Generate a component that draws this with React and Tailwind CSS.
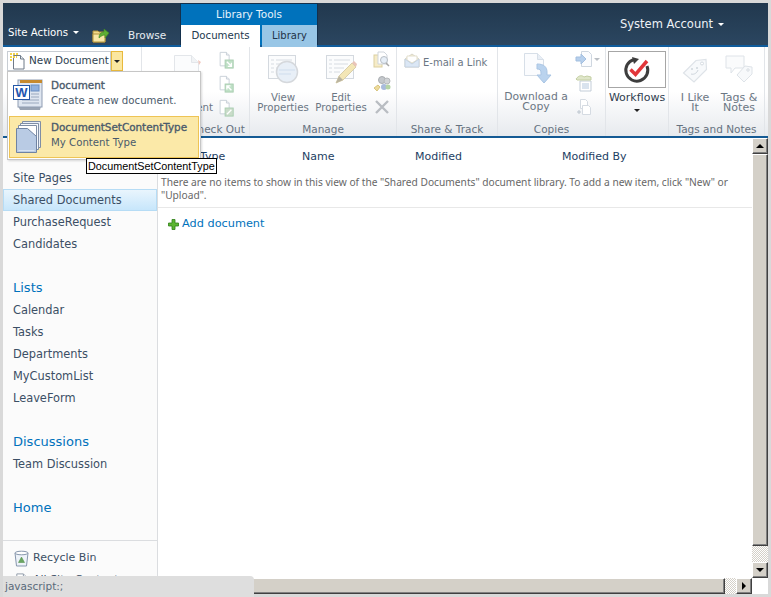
import React from "react";

function Caret({ className = "" }) {
  return <span className={`inline-block w-0 h-0 border-l-[3px] border-r-[3px] border-t-[3px] border-l-transparent border-r-transparent ${className}`} />;
}

function PageIcon({ w = 16, h = 16, className = "" }) {
  return (
    <svg width={w} height={h} viewBox="0 0 16 16" className={className}>
      <path d="M3 1.500h7l3.500 3.500v9.500H3z" fill="#fff" stroke="#8e99a6" strokeWidth="1" />
      <path d="M10 1.500V5h3.500" fill="#e6ebf1" stroke="#8e99a6" strokeWidth="1" />
    </svg>
  );
}

function NewDocIcon() {
  return (
    <svg width="16" height="17" viewBox="0 0 16 17" className="shrink-0">
      <path d="M3.500 2.500h7l3.500 3.500v10H3.500z" fill="#fff" stroke="#6f7a88" />
      <path d="M10.500 2.500V6H14" fill="#e6ebf1" stroke="#6f7a88" />
      <g fill="#f2d24a">
        <rect x="0" y="0" width="2" height="2" />
        <rect x="3" y="0" width="2" height="2" />
        <rect x="6" y="0" width="2" height="2" />
        <rect x="0" y="3" width="2" height="2" />
        <rect x="3" y="3" width="2" height="2" />
        <rect x="0" y="6" width="2" height="2" />
        <rect x="6" y="3" width="1" height="2" />
      </g>
    </svg>
  );
}

function FaintEditDoc() {
  return (
    <svg width="30" height="32" viewBox="0 0 30 32">
      <path d="M2.500 2.500h17l7 7v20h-24z" fill="#fbfcfd" stroke="#e3e6ea" />
      <path d="M19.500 2.500v7h7" fill="#f1f3f5" stroke="#e3e6ea" />
      <path d="M26 7l3 2-2 3z" fill="#f0c9c0" />
    </svg>
  );
}

function SmallDoc({ arrow, color = "#bfe0c6" }) {
  return (
    <svg width="18" height="18" viewBox="0 0 18 20">
      <path d="M2.500 1.500h7l3 3v12h-10z" fill="#fff" stroke="#c6ced6" />
      <path d="M9.500 1.500v3h3" fill="#eef1f4" stroke="#c6ced6" />
      <rect x="8" y="10" width="9" height="9" fill={color} stroke="#a8cdb0" />
      <path d={arrow} stroke="#fff" strokeWidth="1.500" fill="none" />
    </svg>
  );
}

function ViewPropsIcon() {
  return (
    <svg width="32" height="32" viewBox="0 0 32 32">
      <rect x="1.500" y="2.500" width="27" height="23" fill="#fbfcfd" stroke="#d4d9df" />
      <path d="M4 7h3M4 11h3M4 15h3M4 19h3M9 7h16M9 11h10M9 15h8M9 19h8" stroke="#d7dce2" />
      <circle cx="20" cy="19" r="10.500" fill="#e8eff7" stroke="#d5d8dc" strokeWidth="1.500" />
      <path d="M12 17h16M12 21h12" stroke="#cfdded" />
    </svg>
  );
}

function EditPropsIcon() {
  return (
    <svg width="32" height="32" viewBox="0 0 32 32">
      <rect x="1.500" y="2.500" width="27" height="23" fill="#fbfcfd" stroke="#d4d9df" />
      <path d="M4 7h3M4 11h3M4 15h3M4 19h3M9 7h16M9 11h14M9 15h10M9 19h6" stroke="#d7dce2" />
      <path d="M11 30l3-7L27 10l4 4-13 13z" fill="#f3e6b6" stroke="#d8ceaa" />
      <path d="M27 10l2-2 3 3-1 3z" fill="#e9c4b8" />
      <path d="M11 30l3-7 4 4z" fill="#b9b3a0" />
    </svg>
  );
}

function SearchDocIcon() {
  return (
    <svg width="18" height="18" viewBox="0 0 18 18">
      <rect x="1" y="4" width="8" height="12" fill="#f6ecc8" stroke="#dccf9f" />
      <path d="M5 1h6l3 3v9H5z" fill="#fff" stroke="#cfd5dc" />
      <circle cx="11" cy="9" r="3.500" fill="#e6eef7" stroke="#b8bec5" />
      <path d="M13 12l3 3" stroke="#a9a9a9" strokeWidth="1.500" />
    </svg>
  );
}

function PermIcon() {
  return (
    <svg width="18" height="18" viewBox="0 0 18 18">
      <circle cx="9" cy="5" r="3.500" fill="#c4c8cc" stroke="#a8acb0" />
      <circle cx="14" cy="6" r="3" fill="#d0d3d6" stroke="#b5b8bb" />
      <circle cx="11" cy="12" r="3" fill="#a9bbdc" />
      <circle cx="15" cy="12" r="2.500" fill="#b5d4a6" />
      <path d="M1 13l4-3 2 2-3 4z" fill="#eedb9c" stroke="#d8c57f" />
    </svg>
  );
}

function MailIcon() {
  return (
    <svg width="16" height="15" viewBox="0 0 16 15" className="shrink-0">
      <path d="M1 6l7-5 7 5v8H1z" fill="#f6f0d6" stroke="#d9d6c8" />
      <path d="M3 7V3h10v4l-5 3z" fill="#fff" stroke="#e3dfcd" />
      <path d="M1 6l7 5 7-5v8H1z" fill="#dbe7f5" stroke="#c5d2e2" />
    </svg>
  );
}

function DownloadIcon() {
  return (
    <svg width="32" height="32" viewBox="0 0 32 32">
      <path d="M4.500 1.500h13l6 6v16h-19z" fill="#fbfcfe" stroke="#d7dfe8" />
      <path d="M17.500 1.500v6h6" fill="#e8eef5" stroke="#d7dfe8" />
      <path d="M17 12c7 0 10 3 10 8v3h4l-7 8-7-8h4v-2c0-3-1-4-4-4z" fill="#bad3ee" stroke="#a9c5e4" />
    </svg>
  );
}

function SendToIcon() {
  return (
    <svg width="18" height="17" viewBox="0 0 18 17">
      <path d="M6.500.5h7l3 3v12h-10z" fill="#fbfcfe" stroke="#cfd7e0" />
      <path d="M1 6h5V3l5 5-5 5v-3H1z" fill="#b6cfec" stroke="#a3bfdf" />
    </svg>
  );
}

function ManageCopyIcon() {
  return (
    <svg width="18" height="18" viewBox="0 0 18 18">
      <path d="M5 7h11v10H5z" fill="#fff" stroke="#c3cdd8" />
      <path d="M7 10h7M7 12h7M7 14h7" stroke="#b3c7dd" />
      <path d="M1 5c3-4 6-4 8-2l3-1 4 1v3H2z" fill="#dfe6c9" stroke="#c4cfa4" />
    </svg>
  );
}

function ExportIcon() {
  return (
    <svg width="18" height="18" viewBox="0 0 18 18">
      <path d="M5.500 1.500h5l2 2v7h-7z" fill="#fff" stroke="#d5dbe2" />
      <path d="M7.500 7.500h6l2 2v7h-8z" fill="#fff" stroke="#d5dbe2" />
      <path d="M2 14h4M4 12v4" stroke="#bcc5ce" />
    </svg>
  );
}

function WorkflowIcon() {
  return (
    <svg width="28" height="28" viewBox="0 0 28 28">
      <path d="M11 3.500A11 11 0 1 0 24 10" fill="none" stroke="#3d3d3d" strokeWidth="3" />
      <path d="M9 1l7 2-5 5z" fill="#3d3d3d" />
      <path d="M7.500 13.500l5 5L24 5" fill="none" stroke="#e2363a" strokeWidth="3.500" />
    </svg>
  );
}

function LikeIcon() {
  return (
    <svg width="26" height="26" viewBox="0 0 26 26">
      <path d="M1.500 16L14 3.500l10-1 .5 10L12 25z" fill="#f7f9fb" stroke="#dee3e8" strokeWidth="1.200" />
      <circle cx="20" cy="6.500" r="1.500" fill="#fff" stroke="#d5dbe1" />
      <circle cx="10" cy="12" r="1" fill="#cfd6dd" />
      <circle cx="15" cy="11" r="1" fill="#cfd6dd" />
      <path d="M9 17c3 1 6-1 7-4" stroke="#cfd6dd" fill="none" />
    </svg>
  );
}

function TagsIcon() {
  return (
    <svg width="28" height="28" viewBox="0 0 28 28">
      <path d="M1 1h18v12H10l-4 5v-5H1z" fill="#fafbfc" stroke="#dee3e8" />
      <path d="M12 20l8-9 7 1v7l-8 8z" fill="#f7f9fb" stroke="#dee3e8" />
      <circle cx="23" cy="15" r="1.200" fill="#fff" stroke="#d5dbe1" />
    </svg>
  );
}

function WordIcon() {
  return (
    <svg width="32" height="32" viewBox="0 0 32 32" className="shrink-0 mt-[2px]">
      <path d="M5 27l2 4h20l1-4z" fill="#9aa4b3" />
      <rect x="5" y="1" width="24" height="27" fill="#dfe6f0" stroke="#8f9db3" />
      <rect x="7" y="1" width="22" height="3" fill="#c68a2e" />
      <rect x="18" y="6" width="8" height="6" fill="#8fb0dd" stroke="#6b8fc2" />
      <path d="M18 15h8M18 18h8M9 21h17M9 24h17" stroke="#9aa8bd" />
      <rect x="0.500" y="6.500" width="16" height="14" fill="#fff" stroke="#2458a8" />
      <text x="8.500" y="18" textAnchor="middle" fontSize="13" fontWeight="700" fill="#1e56b0" fontFamily="Liberation Sans, sans-serif">W</text>
    </svg>
  );
}

function DocSetIcon() {
  return (
    <svg width="27" height="32" viewBox="0 0 27 32" className="shrink-0 mt-[2px]">
      <path d="M6.500.5h18v26h-18z" fill="#e8eef7" stroke="#7f8ea5" />
      <path d="M4.500 2.500h18v26h-18z" fill="#f5f8fc" stroke="#7f8ea5" />
      <path d="M2.500 4.500h18v26h-18z" fill="#fff" stroke="#7f8ea5" />
      <path d="M.5 31.500V7.500h11l9 8v16z" fill="#b9cbe4" stroke="#6f83a2" />
      <path d="M2.500 29.500h16" stroke="#d8e3f2" />
    </svg>
  );
}

function FolderUpIcon() {
  return (
    <svg width="18" height="16" viewBox="0 0 18 16">
      <path d="M1 4h5l1 1h6v10H1z" fill="#f0d98a" stroke="#b0923a" />
      <path d="M1 7h12v8H1z" fill="#f8e7a6" stroke="#b0923a" />
      <path d="M7 11c0-4 2-6 5-6V2l5 4-4 5V8c-2 0-4 1-6 3z" fill="#5fae35" stroke="#3f8a1f" strokeWidth="0.600" />
    </svg>
  );
}

function RecycleIcon() {
  return (
    <svg width="15" height="17" viewBox="0 0 15 17" className="shrink-0">
      <path d="M1 3l1.500 13h10L14 3z" fill="#eef3f9" stroke="#8797ad" />
      <ellipse cx="7.500" cy="3" rx="6.500" ry="1.800" fill="#fff" stroke="#8797ad" />
      <path d="M7.500 7l3 5.500h-6z" fill="#6aa561" stroke="#4a8a45" strokeWidth="0.500" />
    </svg>
  );
}

function RibbonButton({ icon, lines, iconClass = "h-[40px]", textClass = "text-[11px]" }) {
  return (
    <div className={`flex flex-col items-center leading-[10px] text-[#6b7683] ${textClass}`}>
      <div className={iconClass}>{icon}</div>
      {lines.map((l) => (
        <span key={l} className="whitespace-nowrap">{l}</span>
      ))}
    </div>
  );
}

function Group({ w, label, children, noBorder, labelClass = "" }) {
  return (
    <div className={`${w} shrink-0 flex flex-col h-full ${noBorder ? "" : "border-r border-r-[#e2e5e9]"}`}>
      <div className="flex-1 min-h-0 flex pt-[5px]">{children}</div>
      <div className={`h-[18px] text-center text-[10.5px] leading-[22px] whitespace-nowrap text-[#66727f] ${labelClass}`}>{label}</div>
    </div>
  );
}

function SideLink({ children, active }) {
  const look = active
    ? "border border-[#b6dcf5] pl-[9px] leading-[20px] bg-gradient-to-b from-[#e9f5fd] to-[#c7e6fb]"
    : "pl-[10px] leading-[22px]";
  return <div className={`h-[22px] text-[11.4px] text-[#3b4f65] whitespace-nowrap ${look}`}>{children}</div>;
}

function SideHead({ children }) {
  return <div className="mt-[22px] h-[22px] pl-[10px] text-[13px] leading-[22px] text-[#0072bc]">{children}</div>;
}

function ScrollBtn({ children }) {
  return (
    <div className="w-[16px] h-[16px] shrink-0 flex items-center justify-center bg-[#d4d0c8] border border-t-white border-l-white border-r-[#404040] border-b-[#404040] shadow-[inset_-1px_-1px_0_#808080]">
      {children}
    </div>
  );
}

const checker = "bg-[repeating-conic-gradient(#d4d0c8_0_25%,#ffffff_0_50%)] bg-[length:2px_2px]";

export default function App() {
  return (
    <div className="relative w-[771px] h-[597px] overflow-hidden bg-[#d9d9d9] pt-[3px] pl-[3px] font-['DejaVu_Sans',sans-serif]">
      <div className="w-[765px] h-[591px] flex flex-col bg-white overflow-hidden">
        {/* top bar */}
        <div className="h-[44px] shrink-0 flex items-end bg-gradient-to-b from-[#21384e] to-[#2b4660] border-b-2 border-b-[#0f5c9c] text-white">
          <div className="w-[177px] flex items-center h-full shrink-0">
            <span className="ml-[5px] mt-[17px] flex items-center gap-[5px] text-[10.2px] whitespace-nowrap">Site Actions <Caret className="border-t-white" /></span>
            <span className="ml-[13px] mt-[22px]"><FolderUpIcon /></span>
            <span className="ml-[18px] mt-[23px] text-[10.5px] text-[#e6ebf0]">Browse</span>
          </div>
          <div className="w-[138px] h-[42px] shrink-0 flex flex-col bg-[#0072bc] border-x border-t border-[#14304c]">
            <div className="h-[21px] text-center text-[10.5px] leading-[21px] text-[#e6f2fb]">Library Tools</div>
            <div className="flex-1 flex gap-[2px]">
              <div className="w-[79px] bg-white text-[#22384e] text-center text-[10.2px] leading-[22px]">Documents</div>
              <div className="w-[55px] bg-[#98c6e6] text-[#1f3448] text-center text-[10px] leading-[22px]">Library</div>
            </div>
          </div>
          <div className="flex-1 h-full flex items-start justify-end pr-[44px] pt-[14px]">
            <span className="flex items-center gap-[5px] text-[11.5px] leading-[14px] whitespace-nowrap text-[#eef2f6]">System Account <Caret className="border-t-white" /></span>
          </div>
        </div>

        {/* ribbon */}
        <div className="h-[91px] shrink-0 flex bg-gradient-to-b from-[#ffffff] via-[#ffffff] to-[#e7eaee] border-b-2 border-b-[#145a94]">
          <Group w="w-[139px]" label="">
            <div className="ml-[4px] -mt-[1px] h-[20px] w-[116px] flex">
              <div className="w-[104px] h-[20px] flex items-center pl-[2px] border border-[#c8cdd3] bg-white text-[10.4px] text-[#2f3f50]">
                <NewDocIcon />
                <span className="ml-[3px] whitespace-nowrap">New Document</span>
              </div>
              <div className="w-[12px] h-[20px] flex items-center justify-center bg-[#fbe7a0] border border-[#e8b93c]">
                <Caret className="border-t-[#222]" />
              </div>
            </div>
          </Group>
          <Group w="w-[108px]" label="Check Out" labelClass="pl-[44px]">
            <div className="ml-[27px] w-[35px] mt-[1px]">
              <RibbonButton icon={<FaintEditDoc />} lines={["Edit", "Document"]} textClass="text-[10.2px]" />
            </div>
            <div className="ml-[13px] -mt-[1px] flex flex-col gap-[6px]">
              <SmallDoc arrow="M10 12l5 5M15 13v4h-4" />
              <SmallDoc arrow="M15 17l-5-5M10 16v-4h4" />
              <SmallDoc arrow="M10 17l5-5" color="#c9dcc9" />
            </div>
          </Group>
          <Group w="w-[147px]" label="Manage">
            <div className="ml-[7px] w-[52px] pt-[1px]"><RibbonButton icon={<ViewPropsIcon />} lines={["View", "Properties"]} textClass="text-[10.2px]" /></div>
            <div className="ml-[6px] w-[52px] pt-[1px]"><RibbonButton icon={<EditPropsIcon />} lines={["Edit", "Properties"]} textClass="text-[10.2px]" /></div>
            <div className="ml-[6px] -mt-[1px] flex flex-col gap-[6px]">
              <SearchDocIcon />
              <PermIcon />
              <svg width="16" height="16" viewBox="0 0 16 16" className="ml-[1px]"><path d="M2 2l12 12M14 2L2 14" stroke="#b9bdc2" strokeWidth="2.400" /></svg>
            </div>
          </Group>
          <Group w="w-[101px]" label="Share & Track" labelClass="text-[10.2px]">
            <div className="ml-[7px] mt-[1px] h-[16px] flex items-start gap-[3px] text-[10px] text-[#6b7683] whitespace-nowrap"><MailIcon /><span className="mt-[2px]">E-mail a Link</span></div>
          </Group>
          <Group w="w-[108px]" label="Copies">
            <div className="ml-[7px] w-[62px]"><RibbonButton icon={<DownloadIcon />} lines={["Download a", "Copy"]} textClass="text-[10.8px]" /></div>
            <div className="ml-[8px] -mt-[1px] flex flex-col gap-[6px]">
              <div className="flex items-center gap-[1px]"><SendToIcon /><Caret className="border-t-[#b9bec4]" /></div>
              <ManageCopyIcon />
              <ExportIcon />
            </div>
          </Group>
          <Group w="w-[63px]" label="">
            <div className="ml-[2px] flex flex-col items-center w-[58px] text-[11px] leading-[14px] text-[#30404f]">
              <div className="w-[58px] h-[37px] -mt-[1px] border border-[#a6a6a6] bg-white flex items-center justify-center"><WorkflowIcon /></div>
              <span className="mt-[3px]">Workflows</span>
              <Caret className="mt-[4px] border-t-[#222]" />
            </div>
          </Group>
          <Group w="w-[95px]" noBorder label="Tags and Notes" labelClass="text-[10.2px]">
            <div className="ml-[8px] w-[36px] pt-[5px]"><RibbonButton icon={<LikeIcon />} lines={["I Like", "It"]} iconClass="h-[36px]" /></div>
            <div className="ml-[8px] w-[36px] pt-[3px]"><RibbonButton icon={<TagsIcon />} lines={["Tags &", "Notes"]} iconClass="h-[38px]" /></div>
          </Group>
          <div className="flex-1 border-l border-l-[#e2e5e9]" />
        </div>

        {/* body */}
        <div className="flex-1 min-h-0 flex overflow-hidden">
          <div className="w-[155px] shrink-0 bg-[#fbfbfb] border-r border-r-[#dbdde0] pt-[29px] h-full overflow-hidden">
            <SideLink>Site Pages</SideLink>
            <SideLink active>Shared Documents</SideLink>
            <SideLink>PurchaseRequest</SideLink>
            <SideLink>Candidates</SideLink>
            <SideHead>Lists</SideHead>
            <SideLink>Calendar</SideLink>
            <SideLink>Tasks</SideLink>
            <SideLink>Departments</SideLink>
            <SideLink>MyCustomList</SideLink>
            <SideLink>LeaveForm</SideLink>
            <SideHead>Discussions</SideHead>
            <SideLink>Team Discussion</SideLink>
            <SideHead>Home</SideHead>
            <div className="mt-[21px] border-t border-t-[#dbdde0] pt-[6px]">
              <div className="h-[22px] pl-[11px] flex items-center gap-[4px] text-[11px] text-[#3b4f65]"><RecycleIcon /> Recycle Bin</div>
              <div className="h-[22px] pl-[11px] flex items-center gap-[4px] text-[11px] text-[#3b4f65]"><PageIcon w={15} h={16} /> All Site Content</div>
            </div>
          </div>

          <div className="flex-1 min-w-0 flex flex-col">
            <div className="flex-1 min-h-0 bg-white">
              <div className="flex h-[38px] pt-[12px] text-[11px] leading-[14px] text-[#1c3e63] whitespace-nowrap">
                <span className="ml-[42px] w-[102px]">Type</span>
                <span className="w-[113px]">Name</span>
                <span className="w-[147px]">Modified</span>
                <span>Modified By</span>
              </div>
              <div className="pl-[3px] text-[10.2px] leading-[13px] text-[#676767] h-[32px] border-b border-b-[#e8e8e8] whitespace-nowrap font-['Noto_Sans',sans-serif]">
                There are no items to show in this view of the "Shared Documents" document library. To add a new item, click "New" or<br />"Upload".
              </div>
              <div className="mt-[9px] pl-[10px] flex items-center gap-[3px] text-[11.3px] leading-[14px] text-[#0072bc]">
                <svg width="11" height="11" viewBox="0 0 11 11"><path d="M4 .5h3v3.500h3.500v3H7v3.500H4V7H.5V4H4z" fill="#5cb531" stroke="#2f7d16" strokeWidth="0.800" /></svg>
                Add document
              </div>
            </div>
            <div className="h-[16px] shrink-0 flex bg-white">
              <div className="flex-1 bg-[#d4d0c8] border border-t-white border-l-white border-r-[#404040] border-b-[#404040] shadow-[inset_-1px_-1px_0_#808080]" />
              <div className={`w-[11px] ${checker}`} />
              <ScrollBtn><span className="w-0 h-0 border-y-[4px] border-l-[4px] border-y-transparent border-l-black" /></ScrollBtn>
            </div>
          </div>

          <div className="w-[16px] shrink-0 flex flex-col bg-white">
            <ScrollBtn><span className="w-0 h-0 border-x-[4px] border-b-[4px] border-x-transparent border-b-black" /></ScrollBtn>
            <div className="flex-1 bg-[#d4d0c8] border border-t-white border-l-white border-r-[#404040] border-b-[#404040] shadow-[inset_-1px_-1px_0_#808080]" />
            <div className={`h-[16px] shrink-0 ${checker}`} />
            <ScrollBtn><span className="w-0 h-0 border-x-[4px] border-t-[4px] border-x-transparent border-t-black" /></ScrollBtn>
            <div className="h-[16px] shrink-0 bg-white" />
          </div>
        </div>
      </div>

      {/* dropdown */}
      <div className="absolute left-[7px] top-[71px] w-[194px] h-[89px] bg-white border border-[#c6c6c6] shadow-[1px_1px_2px_rgba(0,0,0,0.15)] p-[1px]">
        <div className="h-[43px] flex pl-[4px] pt-[4px]">
          <WordIcon />
          <div className="ml-[6px] text-[#4a5a6b] text-[10.2px] leading-[16px] whitespace-nowrap">
            <div className="text-[10.4px] [-webkit-text-stroke:0.35px_#4a5a6b]">Document</div>
            <div>Create a new document.</div>
          </div>
        </div>
        <div className="h-[42px] flex pl-[6px] pt-[2px] bg-[#fbe9a8] border border-[#eec455]">
          <DocSetIcon />
          <div className="ml-[8px] text-[#4a5a6b] text-[10.2px] leading-[16px] whitespace-nowrap">
            <div className="text-[10.4px] [-webkit-text-stroke:0.35px_#4a5a6b]">DocumentSetContentType</div>
            <div>My Content Type</div>
          </div>
        </div>
      </div>

      {/* tooltip */}
      <div className="absolute left-[86px] top-[158px] h-[16px] px-[1px] bg-white border border-black text-[10.8px] leading-[14px] text-black whitespace-nowrap font-['Liberation_Sans',sans-serif]">DocumentSetContentType</div>

      {/* status */}
      <div className="absolute left-[3px] top-[576px] w-[251px] h-[21px] bg-[#dedede] rounded-tr-[4px] pl-[2px] text-[10.5px] leading-[20px] text-[#5a6a7a]">javascript:;</div>
    </div>
  );
}
